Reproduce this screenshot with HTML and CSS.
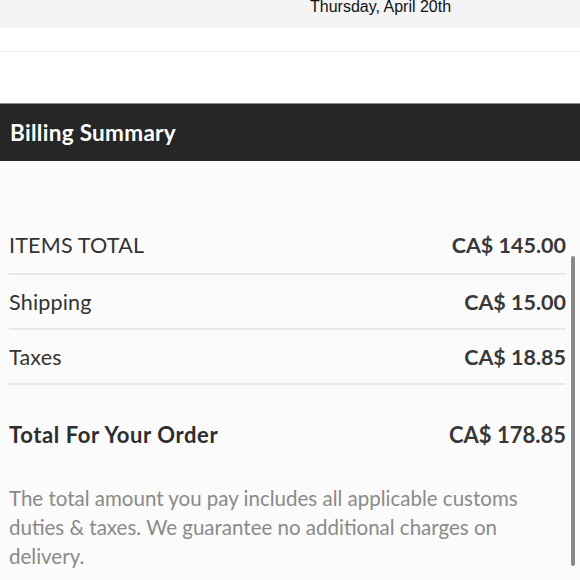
FILE: index.html
```html
<!DOCTYPE html>
<html>
<head>
<meta charset="utf-8">
<link rel="stylesheet" href="styles.css">
</head>
<body>
<div class="topbar"><span class="date">Thursday, April 20th</span></div>
<div class="spacer"><div class="spacer-line"></div></div>
<div class="header">Billing Summary</div>
<div class="summary">
  <div class="row first"><span class="label">ITEMS TOTAL</span><span class="value">CA$ 145.00</span></div>
  <div class="row"><span class="label">Shipping</span><span class="value">CA$ 15.00</span></div>
  <div class="row"><span class="label">Taxes</span><span class="value">CA$ 18.85</span></div>
  <div class="row total"><span class="label">Total For Your Order</span><span class="value">CA$ 178.85</span></div>
  <p class="note">The total amount you pay includes all applicable customs duties &amp; taxes. We guarantee no additional charges on delivery.</p>
  <div class="scrollbar"></div>
</div>
</body>
</html>
```
FILE: styles.css
```css
html, body {
  margin: 0;
  padding: 0;
  background: #fbfbfb;
  height: 580px;
  overflow: hidden;
}
body {
  font-family: "Lato", "Open Sans", sans-serif;
  color: #333;
}
.topbar {
  height: 28px;
  background: #f4f4f4;
  position: relative;
}
.date {
  position: absolute;
  left: 310px;
  top: -2px;
  font-family: "Liberation Sans", Arial, sans-serif;
  font-size: 16px;
  line-height: 18px;
  color: #111;
}
.spacer {
  height: 75px;
  background: #fff;
}
.spacer-line {
  height: 23px;
  border-bottom: 1px solid #f2f2f2;
}
.header {
  box-sizing: border-box;
  height: 58px;
  background: #262626;
  border-top: 1px solid #8a8a8a;
  color: #fff;
  font-size: 22.5px;
  font-weight: 700;
  letter-spacing: 0.3px;
  padding-left: 10px;
  display: flex;
  align-items: center;
}
.summary {
  position: relative;
  padding: 71px 14px 0 9px;
}
.row {
  display: flex;
  justify-content: space-between;
  align-items: center;
  height: 53px;
  border-bottom: 2px solid #e8e8e8;
  font-size: 21.5px;
}
.row.first {
  height: 41px;
  align-items: flex-start;
}
.label {
  font-weight: 400;
  color: #333;
  letter-spacing: 0.2px;
}
.value {
  font-weight: 700;
  color: #383838;
}
.total {
  border-bottom: none;
  height: 99px;
  font-size: 22px;
}
.total .label {
  font-weight: 700;
  letter-spacing: 0.6px;
  color: #2e2e2e;
}
.note {
  margin: 0;
  font-size: 20.5px;
  line-height: 29px;
  color: #8a8a8a;
  max-width: 520px;
}
.scrollbar {
  position: absolute;
  right: 5px;
  top: 95px;
  width: 4px;
  height: 310px;
  border-radius: 2px;
  background: #888;
}
```
